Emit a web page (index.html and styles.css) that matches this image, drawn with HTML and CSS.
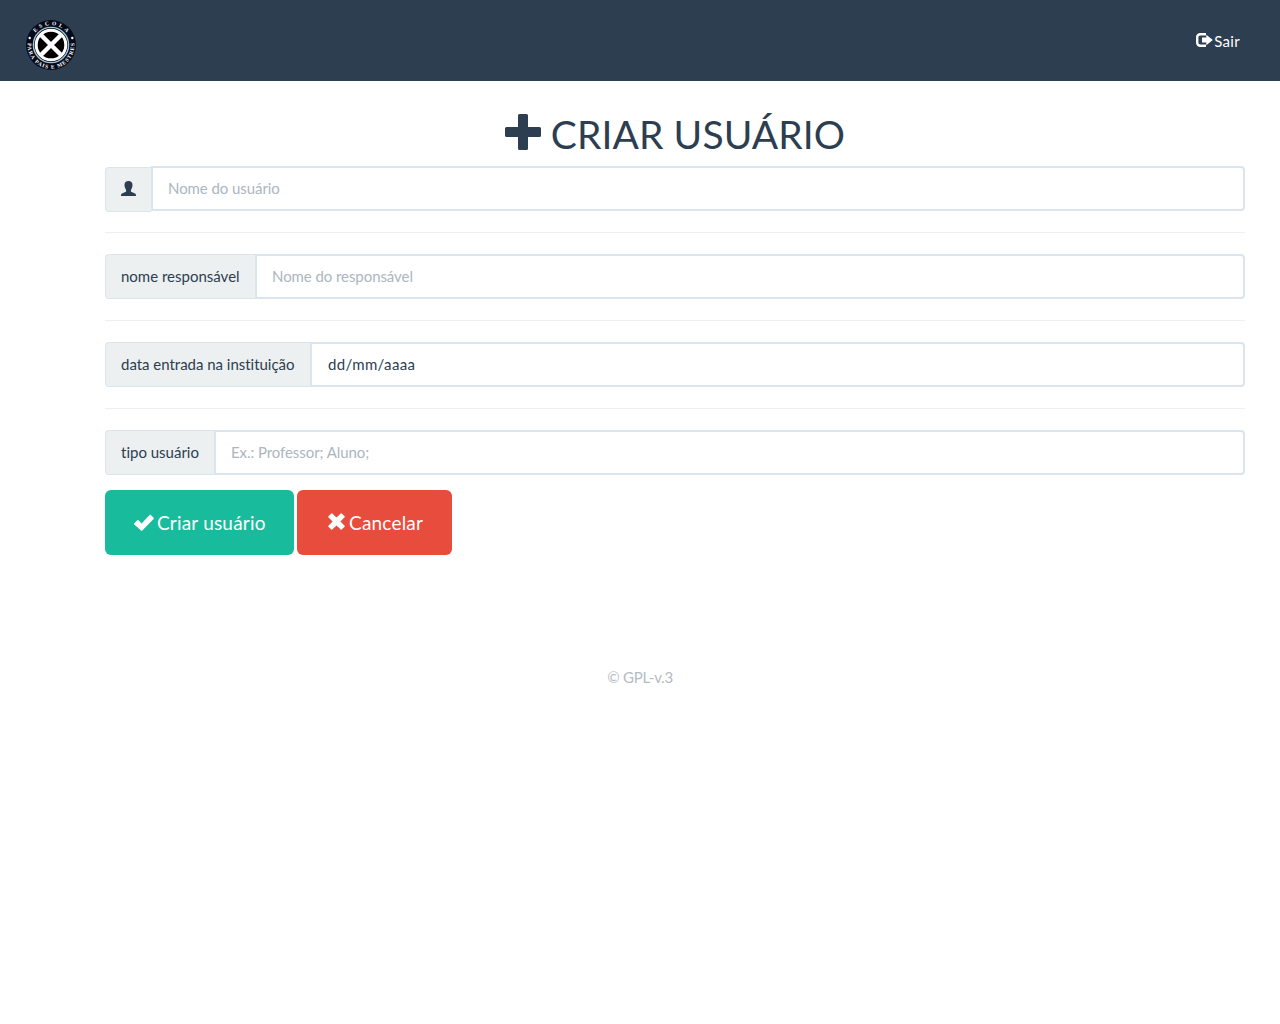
FILE: index.html
```html
<!DOCTYPE html>
<html lang="pt-BR">
<head>
<meta charset="utf-8">
<title>Criar usuário</title>
<link rel="stylesheet" href="styles.css">
</head>
<body>
<header class="navbar">
  <a class="brand" href="#">
    <svg class="logo" viewBox="0 0 50 50" role="img" aria-label="Escola para Pais e Mestres">
      <defs>
        <path id="arc-top" d="M5 25a20 20 0 0 1 40 0"/>
        <path id="arc-bottom" d="M2.100 20.500A23.400 23.400 0 1 0 47.900 20.500"/>
      </defs>
      <circle cx="25" cy="25" r="25" fill="#050b1b"/>
      <circle cx="25" cy="25" r="17.600" fill="#000" stroke="#9ec3dc" stroke-width="1.400"/>
      <circle cx="25" cy="25" r="14.800" fill="#000" stroke="#fff" stroke-width="3"/>
      <path d="M15.2 15.2l19.6 19.6M34.8 15.2L15.2 34.8" stroke="#fff" stroke-width="4.400"/>
      <text class="seal-text"><textPath href="#arc-top" startOffset="50%" text-anchor="middle" textLength="36">ESCOLA</textPath></text>
      <text class="seal-text"><textPath href="#arc-bottom" startOffset="50%" text-anchor="middle" textLength="78">PARA PAIS E MESTRES</textPath></text>
      <circle cx="3.7" cy="18" r="1.200" fill="#fff"/>
      <circle cx="46.3" cy="18" r="1.200" fill="#fff"/>
    </svg>
  </a>
  <a class="logout" href="#">
    <svg class="logout-icon" viewBox="0 0 17 14"><path d="M10 1.200H4.200a3 3 0 0 0-3 3v5.600a3 3 0 0 0 3 3H10" fill="none" stroke="#fff" stroke-width="2.400"/><path d="M10.300 1.700L16.800 7l-6.500 5.300V9.500H6v-5h4.300z" fill="#fff"/></svg>
    <span>Sair</span>
  </a>
</header>
<main class="container">
  <h1 class="title">
    <svg class="plus-icon" viewBox="0 0 36 36"><path d="M14.500 0h7a1.500 1.500 0 0 1 1.500 1.500V13h11.500a1.500 1.500 0 0 1 1.500 1.500v7a1.500 1.500 0 0 1-1.500 1.500H23v11.500a1.500 1.500 0 0 1-1.500 1.500h-7a1.500 1.500 0 0 1-1.500-1.500V23H1.500A1.500 1.500 0 0 1 0 21.500v-7A1.500 1.500 0 0 1 1.500 13H13V1.500A1.500 1.500 0 0 1 14.500 0z"/></svg>
    <span class="title-text">CRIAR USUÁRIO</span>
  </h1>
  <form>
    <div class="input-group first">
      <label class="addon addon-icon" for="nome"><svg class="user-icon" viewBox="0 0 15 15"><path d="M7.500 0C5 0 3.500 1.500 3.500 4c0 1 .1 1.700.4 2.300.2 1.200.7 2 1.200 2.600v1.300c0 .4-.3.700-.8.900L1 12.500c-.7.300-1 .9-1 2.500h15c0-1.600-.3-2.200-1-2.500l-3.300-1.400c-.5-.2-.8-.5-.8-.9V8.900c.5-.6 1-1.400 1.200-2.600.3-.6.4-1.300.4-2.300C11.500 1.500 10 0 7.500 0z"/></svg></label>
      <input id="nome" class="field" type="text" placeholder="Nome do usuário">
    </div>
    <hr class="rule">
    <div class="input-group">
      <label class="addon addon-guardian" for="responsavel">nome responsável</label>
      <input id="responsavel" class="field" type="text" placeholder="Nome do responsável">
    </div>
    <hr class="rule">
    <div class="input-group">
      <label class="addon addon-date" for="data">data entrada na instituição</label>
      <input id="data" class="field date" type="text" value="dd/mm/aaaa">
    </div>
    <hr class="rule">
    <div class="input-group">
      <label class="addon addon-type" for="tipo">tipo usuário</label>
      <input id="tipo" class="field" type="text" placeholder="Ex.: Professor; Aluno;">
    </div>
    <div class="actions">
      <button class="btn btn-success" type="button"><svg class="check-icon" viewBox="0 0 20 17"><path d="M.3 9.300l3-3q.6-.6 1.200 0l3.100 3.100L15.600.9q.6-.6 1.200 0l2.800 2.800q.6.6 0 1.200L8.300 16.500q-.7.600-1.300 0L.3 10.500q-.6-.6 0-1.200z"/></svg><span>Criar usuário</span></button>
      <button class="btn btn-danger" type="button"><svg class="cross-icon" viewBox="0 0 17 17"><path d="M4.300.4l4.200 4.200L12.700.4q.5-.5 1 0l2.900 2.900q.5.5 0 1l-4.200 4.200 4.200 4.200q.5.5 0 1l-2.900 2.900q-.5.5-1 0l-4.200-4.200-4.200 4.200q-.5.5-1 0L.4 13.700q-.5-.5 0-1l4.200-4.200L.4 4.300q-.5-.5 0-1L3.300.4q.5-.5 1 0z"/></svg><span>Cancelar</span></button>
    </div>
  </form>
</main>
<footer class="footer">© GPL-v.3</footer>
</body>
</html>
```
FILE: styles.css
```css
* { box-sizing: border-box; }
body {
  margin: 0;
  background: #fff;
  color: #2c3e50;
  font: 15px/21px Lato, "Liberation Sans", sans-serif;
  font-variant-ligatures: none;
}
svg { display: block; flex: none; fill: currentColor; }
.navbar {
  display: flex;
  justify-content: space-between;
  align-items: flex-start;
  height: 81px;
  padding: 20px 40px 0 26px;
  background: #2c3e50;
}
.logo { width: 50px; height: 50px; }
.seal-text { font: bold 5.500px "Liberation Serif", serif; fill: #fff; }
.logout {
  display: flex;
  gap: 1px;
  margin-top: 11px;
  color: #fff;
  text-decoration: none;
  letter-spacing: 0.3px;
}
.logout-icon { width: 17px; height: 14px; margin-top: 2px; }
.container { width: 1140px; margin-left: 105px; }
.title {
  display: flex;
  justify-content: center;
  gap: 10px;
  height: 85px;
  margin: 0;
  padding-top: 32px;
  font-size: 39px;
  font-weight: 400;
  line-height: 43px;
}
.title-text { letter-spacing: 0.1px; }
.plus-icon { width: 36px; height: 36px; margin-top: 1px; }
.input-group { display: flex; height: 45px; }
.addon {
  flex: none;
  padding: 11px 0 0 15px;
  border: 1px solid #dce4ec;
  border-right: 0;
  border-radius: 4px 0 0 4px;
  background: #ecf0f1;
  white-space: nowrap;
}
.addon-icon { width: 46px; padding-top: 13px; }
.addon-guardian { width: 150px; }
.addon-date { width: 205px; letter-spacing: -0.02px; }
.addon-type { width: 109px; }
.first { align-items: flex-start; height: 46px; }
.first .addon { height: 45px; margin-top: 1px; }
.user-icon { width: 15px; height: 15px; }
.field {
  flex: 1;
  min-width: 0;
  height: 45px;
  padding: 0 15px 2px;
  border: 2px solid #dce4ec;
  border-radius: 0 4px 4px 0;
  background: #fff;
  color: #2c3e50;
  font: inherit;
  letter-spacing: -0.07px;
}
.field::placeholder { color: #acb6c0; opacity: 1; }
.date { padding-left: 16px; letter-spacing: 0.35px; }
.rule { height: 1px; margin: 21px 0; border: 0; background: #ecf0f1; }
.first + .rule { margin-top: 20px; }
.actions { display: flex; gap: 3px; margin-top: 15px; }
.btn {
  display: flex;
  align-items: flex-start;
  height: 65px;
  padding: 19px 0 0 29px;
  border: 0;
  border-radius: 6px;
  color: #fff;
  font: 19px/27px Lato, "Liberation Sans", sans-serif;
  letter-spacing: 0.2px;
}
.btn-success { width: 189px; gap: 3px; background: #18bc9c; }
.btn-danger { width: 155px; gap: 4px; padding-left: 31px; background: #e74c3c; }
.check-icon { width: 20px; height: 17px; margin-top: 5px; }
.cross-icon { width: 17px; height: 17px; margin-top: 4px; }
.footer { margin-top: 112px; text-align: center; color: #b4bcc2; letter-spacing: -0.25px; }
```
